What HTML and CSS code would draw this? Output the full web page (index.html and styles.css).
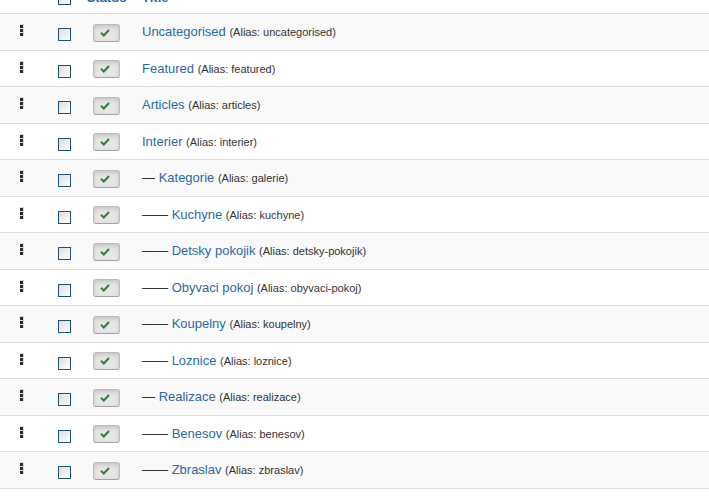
FILE: index.html
```html
<!DOCTYPE html>
<html lang="en">
<head>
    <meta charset="UTF-8">
    <meta name="viewport" content="width=device-width, initial-scale=1.0">
    <title>Categories</title>
    <link rel="stylesheet" href="styles.css">
</head>
<body>

<svg class="sprite" aria-hidden="true">
    <symbol id="dots" viewBox="0 0 4 12">
        <path fill="#d8d8d8" d="M0 0h4v12h-4z"/>
        <path fill="#2b2b2b" d="M0 1h3v3h-3zM0 5h3v3h-3zM0 9h3v3h-3z"/>
    </symbol>
    <symbol id="check" viewBox="0 0 10 8">
        <path fill="none" stroke="#2f8132" stroke-width="2" d="M1 3.8L3.8 6.5L9 1"/>
    </symbol>
</svg>

<div class="list">
    <table class="categories">
        <thead>
            <tr>
                <th class="col-order"></th>
                <th class="col-check"><input type="checkbox" aria-label="Check all"></th>
                <th class="col-status"><a href="#">Status</a></th>
                <th class="col-title"><a href="#">Title</a></th>
            </tr>
        </thead>
        <tbody id="rows"></tbody>
    </table>
</div>

<script src="script.js"></script>
</body>
</html>
```

FILE: script.js
```js
// title, alias, nesting level
const categories = [
    ['Uncategorised', 'uncategorised', 0],
    ['Featured', 'featured', 0],
    ['Articles', 'articles', 0],
    ['Interier', 'interier', 0],
    ['Kategorie', 'galerie', 1],
    ['Kuchyne', 'kuchyne', 2],
    ['Detsky pokojik', 'detsky-pokojik', 2],
    ['Obyvaci pokoj', 'obyvaci-pokoj', 2],
    ['Koupelny', 'koupelny', 2],
    ['Loznice', 'loznice', 2],
    ['Realizace', 'realizace', 1],
    ['Benesov', 'benesov', 2],
    ['Zbraslav', 'zbraslav', 2]
];

document.getElementById('rows').innerHTML = categories.map(([title, alias, level]) => `
    <tr>
        <td class="col-order"><svg class="dots"><use href="#dots"/></svg></td>
        <td class="col-check"><input type="checkbox" aria-label="Select ${title}"></td>
        <td class="col-status"><button type="button" class="btn" aria-label="Unpublish ${title}"><svg class="check"><use href="#check"/></svg></button></td>
        <td class="col-title">${'—'.repeat(level)} <a href="#">${title}</a> <small>(Alias: ${alias})</small></td>
    </tr>`).join('');
```

FILE: styles.css
```css
body {
    margin: 0;
    background: #fff;
    color: #333;
    font-family: "Liberation Sans", Arial, sans-serif;
    font-size: 13px;
    line-height: 18px;
}
.sprite {
    display: none;
}
.list {
    overflow: hidden;
}
/* the header is scrolled almost out of view */
.categories {
    width: 100%;
    margin-top: -23px;
    border-collapse: separate;
    border-spacing: 0;
    table-layout: fixed;
}
th, td {
    box-sizing: border-box;
    height: 36px;
    padding: 0;
    border-bottom: 1px solid #ddd;
    text-align: center;
    vertical-align: top;
}
th {
    height: 37px;
    padding-top: 12px;
}
tbody tr:nth-child(odd) td {
    height: 37px;
    background: #f9f9f9;
}
a {
    color: #2a69a4;
    text-decoration: none;
}
a:hover {
    text-decoration: underline;
}
.col-order, .col-check {
    width: 43px;
}
.col-status {
    width: 41px;
}
.col-title {
    padding-left: 15px;
    text-align: left;
    white-space: nowrap;
}
td.col-title {
    padding-top: 9px;
}
small {
    font-size: 11px;
}
.dots {
    display: block;
    width: 4px;
    height: 12px;
    margin: 10px auto 0 20px;
}
input[type="checkbox"] {
    appearance: none;
    display: block;
    box-sizing: border-box;
    width: 13px;
    height: 13px;
    margin: 14px auto 0;
    border: 1px solid #1c5180;
    background: linear-gradient(135deg, #dcdcd7, #fff);
}
th input[type="checkbox"] {
    margin-top: 3px;
}
input[type="checkbox"]:checked {
    background: #2a69a4;
}
.btn {
    display: flex;
    align-items: center;
    justify-content: center;
    box-sizing: border-box;
    width: 27px;
    height: 18px;
    margin: 10px auto 0;
    padding: 0 3px 1px 0;
    border: 1px solid #bbb;
    border-bottom-color: #a2a2a2;
    border-radius: 3px;
    background: #e6e6e6;
    box-shadow: inset 0 2px 4px rgba(0, 0, 0, 0.15);
    cursor: pointer;
}
tbody tr:nth-child(even) .btn {
    margin-top: 9px;
}
.check {
    width: 10px;
    height: 8px;
}
```
